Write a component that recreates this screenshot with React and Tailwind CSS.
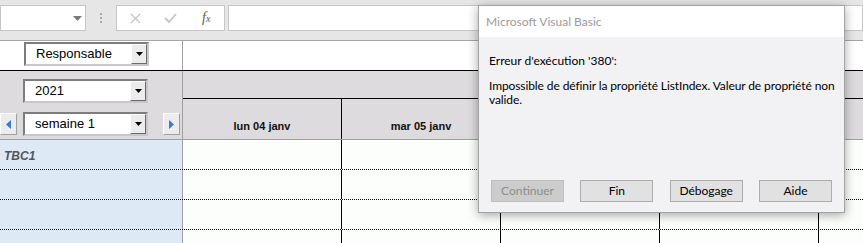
import React from "react"

const ui = { fontFamily: 'Lato, "Noto Sans", sans-serif' }
const sheet = { fontFamily: '"Liberation Sans", Arial, sans-serif' }

function Combo({ label, className = "" }) {
    return (
        <div className={`flex h-[24px] w-[125px] shrink-0 border-2 border-t-[#7d7d7d] border-l-[#7d7d7d] border-b-[#c8c8c8] border-r-[#c8c8c8] bg-white ${className}`}>
            <div className="flex-1 pl-[10px] text-[13px] leading-[20px] text-black" style={sheet}>
                {label}
            </div>
            <div className="flex h-[20px] w-[16px] items-center justify-center border border-t-white border-l-white border-b-[#6a6a6a] border-r-[#6a6a6a] bg-[#ececec]">
                <svg width="7" height="4" viewBox="0 0 7 4">
                    <path d="M0 0h7L3.5 4z" fill="#000" />
                </svg>
            </div>
        </div>
    )
}

function Spin({ dir }) {
    return (
        <div className="flex h-[22px] w-[17px] shrink-0 items-center justify-center border border-t-white border-l-white border-b-[#a0a0a0] border-r-[#a0a0a0] bg-[#ececec]">
            <svg width="5" height="9" viewBox="0 0 5 9">
                {dir === "left"
                    ? <path d="M5 0v9L0 4.5z" fill="#3a78d8" />
                    : <path d="M0 0v9l5-4.5z" fill="#3a78d8" />}
            </svg>
        </div>
    )
}

function DlgButton({ label, disabled }) {
    return (
        <div
            className={`flex h-[22px] w-[73px] items-center justify-center border text-[12px] ${disabled
                    ? "border-[#bfbfbf] bg-[#cccccc] text-[#8d8d8d]"
                    : "border-[#adadad] bg-[#e1e1e1] text-black"
                }`}
        >
            {label}
        </div>
    )
}

export default function App() {

    const days = ["lun 04 janv", "mar 05 janv", "", "", ""]

    return (
        <div className="relative h-[243px] w-[863px] overflow-hidden bg-white">

            {/* Formula bar */}
            <div className="flex h-[41px] items-start border-b border-[#a6a6a6] bg-[#e6e6e6] pt-[5px]">
                <div className="flex h-[26px] w-[86px] shrink-0 items-center justify-end border border-[#c6c6c6] bg-white pr-[3px]">
                    <svg width="9" height="5" viewBox="0 0 9 5">
                        <path d="M0 0h9L4.5 5z" fill="#7a7a7a" />
                    </svg>
                </div>
                <div className="flex w-[30px] shrink-0 flex-col items-center gap-[2px] pt-[8px]">
                    <span className="h-[2px] w-[2px] bg-[#a8a8a8]" />
                    <span className="h-[2px] w-[2px] bg-[#a8a8a8]" />
                    <span className="h-[2px] w-[2px] bg-[#a8a8a8]" />
                </div>
                <div className="flex h-[26px] w-[109px] shrink-0 items-center border border-[#c6c6c6] bg-white">
                    <div className="flex w-[36px] justify-center pl-[2px]">
                        <svg width="11" height="11" viewBox="0 0 11 11">
                            <path d="M1 1l9 9M10 1l-9 9" stroke="#c4c4c4" strokeWidth="1.3" />
                        </svg>
                    </div>
                    <div className="flex w-[36px] justify-center">
                        <svg width="13" height="10" viewBox="0 0 13 10">
                            <path d="M1 5l4 4 7-8" stroke="#c4c4c4" strokeWidth="1.8" fill="none" />
                        </svg>
                    </div>
                    <div className="flex w-[36px] items-baseline justify-center text-[14px] italic leading-none text-[#5a5a5a]" style={{ fontFamily: '"Liberation Serif", serif' }}>
                        f<span className="text-[10px] leading-none">x</span>
                    </div>
                </div>
                <div className="ml-[3px] h-[26px] flex-1 border border-[#c6c6c6] bg-white" />
            </div>

            {/* Row 1 */}
            <div className="flex h-[30px] border-b border-black">
                <div className="flex w-[183px] shrink-0 items-start border-r border-[#a0a0a0] bg-white pl-[24px] pt-[1px]">
                    <Combo label="Responsable" />
                </div>
                <div className="flex-1 bg-white" />
            </div>

            {/* Header block */}
            <div className="flex h-[69px] border-b border-[#a0a0a0] bg-[#dddbdd]">
                <div className="flex w-[183px] shrink-0 flex-col border-r border-[#a0a0a0]">
                    <div className="pl-[23px] pt-[8px]">
                        <Combo label="2021" />
                    </div>
                    <div className="mt-[9px] flex items-center">
                        <Spin dir="left" />
                        <Combo label="semaine 1" className="ml-[6px]" />
                        <div className="ml-[15px]">
                            <Spin dir="right" />
                        </div>
                    </div>
                </div>
                <div className="flex flex-1 flex-col">
                    <div className="h-[28px] border-b border-black" />
                    <div className="flex flex-1">
                        {days.map((d, i) => (
                            <div
                                key={i}
                                className="flex w-[159px] shrink-0 items-end justify-center border-r border-black pb-[5px] text-[11px] font-bold text-[#111]"
                                style={sheet}
                            >
                                {d}
                            </div>
                        ))}
                    </div>
                </div>
            </div>

            {/* Body rows */}
            {[0, 1, 2, 3].map((r) => (
                <div key={r} className="flex h-[30px] border-b border-dotted border-black">
                    <div className="w-[183px] shrink-0 border-r border-[#a0a0a0] bg-[#dde9f4] pl-[4px] pt-[10px] text-[12px] font-bold italic leading-none text-[#555]" style={sheet}>
                        {r === 0 ? "TBC1" : ""}
                    </div>
                    {days.map((_, i) => (
                        <div key={i} className="w-[159px] shrink-0 border-r border-black bg-[#fcfefc]" />
                    ))}
                </div>
            ))}

            {/* Error dialog */}
            <div
                className="absolute left-[478px] top-[5px] flex h-[208px] w-[367px] flex-col border border-[#a3a3a3] bg-[#f2f1f4] shadow-[0_2px_10px_rgba(0,0,0,0.35)]"
                style={ui}
            >
                <div className="flex h-[31px] items-center bg-white pl-[7px] text-[12px] text-[#9a9a9a]">
                    Microsoft Visual Basic
                </div>
                <div className="flex flex-1 flex-col pl-[10px] pr-[4px] pt-[17px] text-[12px] leading-[14px] text-black">
                    <p>Erreur d'exécution '380':</p>
                    <p className="mt-[11px] tracking-[-0.1px]">
                        Impossible de définir la propriété ListIndex. Valeur de propriété non valide.
                    </p>
                    <div className="mt-auto mb-[10px] mr-[6px] flex justify-between px-[2px]">
                        <DlgButton label="Continuer" disabled />
                        <DlgButton label="Fin" />
                        <DlgButton label="Débogage" />
                        <DlgButton label="Aide" />
                    </div>
                </div>
            </div>

        </div>
    )
}
